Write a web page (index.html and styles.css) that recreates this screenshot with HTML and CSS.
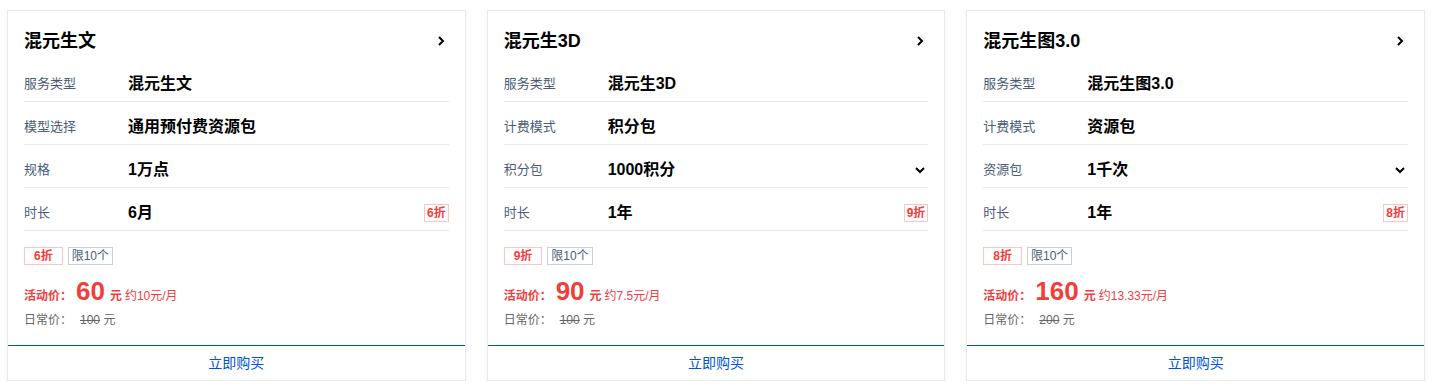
FILE: index.html
```html
<!DOCTYPE html>
<html lang="zh-CN">
<head>
    <meta charset="UTF-8">
    <meta name="viewport" content="width=device-width, initial-scale=1.0">
    <title>资源包</title>
    <link rel="stylesheet" href="styles.css">
</head>
<body>
    <div class="cards">
        <div class="card">
            <div class="card-head">
                <h3 class="card-title">混元生文</h3>
                <svg class="arrow" width="10" height="12" viewBox="0 0 10 12"><path d="M3 2l4 4-4 4" fill="none" stroke="#000" stroke-width="2"/></svg>
            </div>
            <div class="row"><span class="label">服务类型</span><span class="value">混元生文</span></div>
            <div class="row"><span class="label">模型选择</span><span class="value">通用预付费资源包</span></div>
            <div class="row"><span class="label">规格</span><span class="value">1万点</span></div>
            <div class="row"><span class="label">时长</span><span class="value">6月</span><span class="off">6折</span></div>
            <div class="tags">
                <span class="tag tag-red">6折</span>
                <span class="tag tag-gray">限10个</span>
            </div>
            <div class="price">
                <span class="price-label">活动价：</span>
                <span class="price-num">60</span>
                <span class="price-unit">元</span>
                <span class="price-avg">约10元/月</span>
            </div>
            <div class="orig">日常价：<s>100</s> 元</div>
            <a href="#" class="buy">立即购买</a>
        </div>

        <div class="card">
            <div class="card-head">
                <h3 class="card-title">混元生3D</h3>
                <svg class="arrow" width="10" height="12" viewBox="0 0 10 12"><path d="M3 2l4 4-4 4" fill="none" stroke="#000" stroke-width="2"/></svg>
            </div>
            <div class="row"><span class="label">服务类型</span><span class="value">混元生3D</span></div>
            <div class="row"><span class="label">计费模式</span><span class="value">积分包</span></div>
            <div class="row"><span class="label">积分包</span><span class="value">1000积分</span>
                <svg class="down" width="12" height="10" viewBox="0 0 12 10"><path d="M2 3l4 4 4-4" fill="none" stroke="#000" stroke-width="2"/></svg>
            </div>
            <div class="row"><span class="label">时长</span><span class="value">1年</span><span class="off">9折</span></div>
            <div class="tags">
                <span class="tag tag-red">9折</span>
                <span class="tag tag-gray">限10个</span>
            </div>
            <div class="price">
                <span class="price-label">活动价：</span>
                <span class="price-num">90</span>
                <span class="price-unit">元</span>
                <span class="price-avg">约7.5元/月</span>
            </div>
            <div class="orig">日常价：<s>100</s> 元</div>
            <a href="#" class="buy">立即购买</a>
        </div>

        <div class="card">
            <div class="card-head">
                <h3 class="card-title">混元生图3.0</h3>
                <svg class="arrow" width="10" height="12" viewBox="0 0 10 12"><path d="M3 2l4 4-4 4" fill="none" stroke="#000" stroke-width="2"/></svg>
            </div>
            <div class="row"><span class="label">服务类型</span><span class="value">混元生图3.0</span></div>
            <div class="row"><span class="label">计费模式</span><span class="value">资源包</span></div>
            <div class="row"><span class="label">资源包</span><span class="value">1千次</span>
                <svg class="down" width="12" height="10" viewBox="0 0 12 10"><path d="M2 3l4 4 4-4" fill="none" stroke="#000" stroke-width="2"/></svg>
            </div>
            <div class="row"><span class="label">时长</span><span class="value">1年</span><span class="off">8折</span></div>
            <div class="tags">
                <span class="tag tag-red">8折</span>
                <span class="tag tag-gray">限10个</span>
            </div>
            <div class="price">
                <span class="price-label">活动价：</span>
                <span class="price-num">160</span>
                <span class="price-unit">元</span>
                <span class="price-avg">约13.33元/月</span>
            </div>
            <div class="orig">日常价：<s>200</s> 元</div>
            <a href="#" class="buy">立即购买</a>
        </div>
    </div>
</body>
</html>
```

FILE: styles.css
```css
* {
    margin: 0;
    padding: 0;
    box-sizing: border-box;
}
body {
    background: #fff;
    font-family: "Liberation Sans", "Noto Sans CJK SC", sans-serif;
    color: #000;
}
.cards {
    display: grid;
    grid-template-columns: repeat(3, 1fr);
    gap: 21px;
    padding: 10px 16px 0 7px;
}
.card {
    border: 1px solid #e8eaf0;
    box-shadow: 0 2px 6px rgba(54, 58, 80, 0.06);
    background: #fff;
    display: flex;
    flex-direction: column;
}
.card-head {
    display: flex;
    justify-content: space-between;
    align-items: center;
    padding: 16px 16px 4px;
}
.card-title {
    font-size: 18px;
    line-height: 28px;
    font-weight: 700;
}
.arrow {
    margin-right: 3px;
}
.row {
    display: flex;
    align-items: center;
    margin: 0 16px;
    padding: 16px 0 8px;
    line-height: 18px;
    border-bottom: 1px solid #e8e9ee;
}
.label {
    width: 104px;
    font-size: 13px;
    color: #4b5b76;
}
.value {
    flex: 1;
    font-size: 16px;
    font-weight: 600;
}
.down {
    margin-right: 2px;
}
.off {
    font-size: 12px;
    font-weight: 700;
    color: #f23d3d;
    border: 1px solid #ffc4c4;
    line-height: 16px;
    padding: 0 2px;
}
.tags {
    display: flex;
    gap: 5px;
    margin: 16px 16px 0;
}
.tag {
    font-size: 12px;
    line-height: 16px;
    border: 1px solid;
}
.tag-red {
    color: #f23d3d;
    font-weight: 700;
    border-color: #ffc4c4;
    padding: 0 9px;
}
.tag-gray {
    color: #4b5b76;
    border-color: #c9cfda;
    padding: 0 3px;
}
.price {
    display: flex;
    align-items: baseline;
    margin: 11px 16px 0;
    line-height: 30px;
    color: #f23d3d;
    font-size: 12px;
}
.price-label {
    font-weight: 700;
    width: 52px;
}
.price-num {
    font-size: 26px;
    font-weight: 700;
    margin-right: 5px;
}
.price-unit {
    font-weight: 700;
    margin-right: 3px;
}
.orig {
    margin: 0 16px;
    font-size: 12px;
    line-height: 18px;
    color: #666;
}
.orig s {
    margin-left: 8px;
}
.buy {
    margin-top: 16px;
    border-top: 1px solid #0052d9;
    text-align: center;
    line-height: 34px;
    font-size: 14px;
    color: #0052d9;
    text-decoration: none;
}
```
